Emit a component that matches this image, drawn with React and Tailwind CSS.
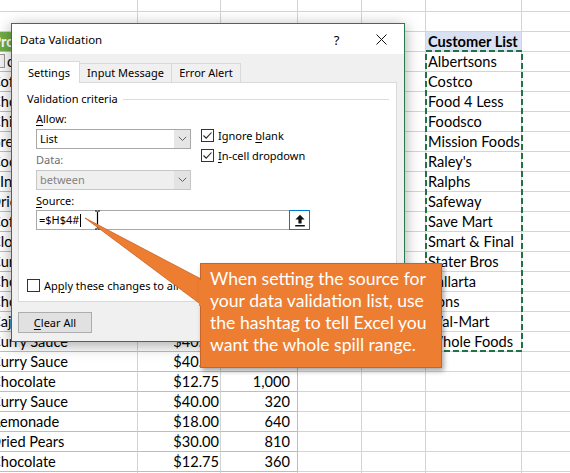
import React from "react";

const C = "ml-[-9px]";
const rows = [
  { k: "top", h: "h-[12px]" },
  { k: "r1" },
  { k: "hdr", a: "Product", o: "ml-[-8px]", b: "Price", c: "Qty", f: "Customer List" },
  { k: "filt", a: "c", b: "$18.00", c: "240", f: "Albertsons" },
  { a: "Coffee", o: C, b: "$46.00", c: "500", f: "Costco" },
  { a: "Chocolate", o: C, b: "$12.75", c: "180", f: "Food 4 Less" },
  { a: "Chips", o: C, b: "$1.80", c: "300", f: "Foodsco" },
  { a: "Green Tea", o: "ml-[-10px]", b: "$2.99", c: "720", f: "Mission Foods" },
  { a: "Cocoa", o: C, b: "$12.75", c: "120", f: "Raley's" },
  { a: "Indian Curry", o: "ml-[0px]", b: "$9.65", c: "250", f: "Ralphs" },
  { a: "Dried Apples", o: "ml-[-10px]", b: "$53.00", c: "40", f: "Safeway" },
  { a: "Coffee", o: C, b: "$46.00", c: "600", f: "Save Mart" },
  { a: "Cloves", o: C, b: "$9.65", c: "480", f: "Smart & Final" },
  { a: "Curry Sauce", o: C, b: "$40.00", c: "90", f: "Stater Bros" },
  { a: "Chocolate", o: C, b: "$12.75", c: "1,200", f: "Vallarta" },
  { a: "Chocolate", o: C, b: "$12.75", c: "860", f: "Vons" },
  { a: "Cajun Seasoning", o: C, b: "$22.00", c: "150", f: "Wal-Mart" },
  { a: "Curry Sauce", o: C, b: "$40.00", c: "320", f: "Whole Foods" },
  { a: "Curry Sauce", o: C, b: "$40.00", c: "640" },
  { a: "Chocolate", o: C, b: "$12.75", c: "1,000" },
  { a: "Curry Sauce", o: C, b: "$40.00", c: "320" },
  { a: "Lemonade", o: "ml-[-7px]", b: "$18.00", c: "640" },
  { a: "Dried Pears", o: "ml-[-10px]", b: "$30.00", c: "810" },
  { a: "Chocolate", o: C, b: "$12.75", c: "360" },
  { k: "bottom" },
];

function SheetRow({ r, i }) {
  const inTable = i >= 2 && i <= 23;
  const h = r.h || "h-[20px]";
  const bA = inTable ? "border-b-[#a9d08e]" : "border-b-[#d4d4d4]";
  const isHdr = r.k === "hdr";
  const fill = isHdr ? "bg-[#70ad47] text-white font-bold" : "text-black";
  return (
    <div className={`flex ${h} shrink-0`}>
      <div className={`w-[138px] shrink-0 border-b border-r border-r-[#d4d4d4] ${bA} ${fill} flex items-start overflow-hidden whitespace-nowrap`}>
        {r.k === "filt" ? (
          <>
            <span className="ml-[-1px] mt-[2px] w-[6px] h-[14px] border border-[#9a9a9a] bg-[#f4f4f4] shrink-0" />
            <span className="ml-[2px]">{r.a}</span>
          </>
        ) : (
          <span className={`${r.o || ""} shrink-0`}>{r.a}</span>
        )}
      </div>
      <div className={`w-[83px] shrink-0 border-b border-r border-r-[#d4d4d4] ${bA} ${fill} pr-[1px] flex justify-end items-start`}>
        <span>{r.b}</span>
      </div>
      <div className={`w-[77px] shrink-0 border-b border-r ${inTable ? "border-r-[#a9d08e]" : "border-r-[#d4d4d4]"} ${bA} ${fill} pr-[7px] flex justify-end items-start`}>
        <span>{r.c}</span>
      </div>
      <div className="w-[64px] shrink-0 border-b border-r border-[#d4d4d4]" />
      <div className="w-[64px] shrink-0 border-b border-r border-[#d4d4d4]" />
      <div className={`w-[96px] shrink-0 border-b border-r border-[#d4d4d4] pl-[2px] whitespace-nowrap overflow-hidden ${isHdr ? "bg-[#d9e1f2] font-bold" : ""}`}>
        {r.f}
      </div>
      <div className="w-[60px] shrink-0 border-b border-[#d4d4d4]" />
    </div>
  );
}

function Check({ checked }) {
  return (
    <span className="w-[13px] h-[13px] shrink-0 border border-[#333333] bg-white flex items-center justify-center">
      {checked && (
        <svg width="11" height="11" viewBox="0 0 11 11">
          <polyline points="1.5,5.5 4.2,8.2 9.5,2.5" fill="none" stroke="#222" strokeWidth="1.1" />
        </svg>
      )}
    </span>
  );
}

function Chevron() {
  return (
    <svg width="9" height="6" viewBox="0 0 9 6">
      <polyline points="0.8,0.8 4.5,4.5 8.2,0.8" fill="none" stroke="#606060" strokeWidth="1" />
    </svg>
  );
}

function Dialog() {
  return (
    <div className="absolute left-[11px] top-[23px] w-[394px] h-[319px] border border-[#2a7a4f] bg-[#f0f0f0] shadow-[0_3px_14px_rgba(0,0,0,0.35)] flex flex-col overflow-hidden text-[11px] leading-[16px] text-black font-['Noto_Sans',sans-serif]">
      {/* title bar */}
      <div className="h-[30px] shrink-0 bg-white flex items-center">
        <span className="pl-[8px] text-[11.5px] mt-[1px]">Data Validation</span>
        <span className="ml-auto w-[45px] flex justify-center text-[13px] mt-[1px]">?</span>
        <span className="w-[45px] flex justify-center items-center mt-[1px]">
          <svg width="11" height="11" viewBox="0 0 11 11">
            <path d="M0.5 0.5 L10.5 10.5 M10.5 0.5 L0.5 10.5" stroke="#111" strokeWidth="1" />
          </svg>
        </span>
      </div>
      {/* body */}
      <div className="pl-[6px] pt-[7px] flex flex-col">
        <div className="flex items-end h-[21px]">
          <div className="relative z-10 -mb-px h-[22px] w-[62px] bg-white border border-b-0 border-[#d9d9d9] flex items-center justify-center">
            Settings
          </div>
          <div className="h-[19px] w-[92px] border border-l-0 border-b-0 border-[#d9d9d9] flex items-center justify-center">
            Input Message
          </div>
          <div className="h-[19px] w-[69px] border border-l-0 border-b-0 border-[#d9d9d9] flex items-center justify-center">
            Error Alert
          </div>
        </div>
        <div className="w-[379px] h-[220px] bg-white border border-[#d9d9d9] pl-[8px] flex flex-col">
          <div className="mt-[8px] flex items-center">
            <span>Validation criteria</span>
            <span className="flex-1 h-px bg-[#dcdcdc] ml-[5px] mr-[7px]" />
          </div>
          <div className="pl-[9px] flex flex-col">
            <div className="mt-[4px]">
              <span className="underline underline-offset-2">A</span>llow:
            </div>
            <div className="mt-[2px] flex">
              <div className="w-[155px] flex flex-col">
                <div className="h-[20px] border border-[#a8a8a8] bg-white flex items-center">
                  <span className="flex-1 pl-[3px]">List</span>
                  <span className="w-[16px] h-full bg-[#e6e6e6] flex items-center justify-center">
                    <Chevron />
                  </span>
                </div>
                <div className="mt-[3px] text-[#6d6d6d]">Data:</div>
                <div className="mt-[2px] h-[20px] border border-[#c6c6c6] bg-[#efefef] flex items-center text-[#838383]">
                  <span className="flex-1 pl-[3px]">between</span>
                  <span className="w-[16px] h-full bg-[#e3e3e3] flex items-center justify-center">
                    <Chevron />
                  </span>
                </div>
              </div>
              <div className="ml-[10px] flex flex-col gap-[7px]">
                <div className="flex items-center gap-[4px] h-[13px]">
                  <Check checked />
                  <span>
                    Ignore <span className="underline underline-offset-2">b</span>lank
                  </span>
                </div>
                <div className="flex items-center gap-[4px] h-[13px]">
                  <Check checked />
                  <span>
                    <span className="underline underline-offset-2">I</span>n-cell dropdown
                  </span>
                </div>
              </div>
            </div>
            <div className="mt-[3px]">
              <span className="underline underline-offset-2">S</span>ource:
            </div>
            <div className="mt-[1px] w-[274px] h-[20px] border border-[#a8a8a8] bg-white flex items-center">
              <span className="pl-[2px] flex items-center">
                =$H$4#
                <span className="ml-[1px] w-px h-[13px] bg-black" />
              </span>
              <span className="ml-auto h-[20px] w-[21px] -mr-px border border-[#0078d7] bg-white flex items-center justify-center">
                <svg width="12" height="13" viewBox="0 0 12 13">
                  <path d="M6 0.8 L10.6 5.6 H7.6 V9.6 H4.4 V5.6 H1.4 Z" fill="#111" />
                  <rect x="1.2" y="11" width="9.6" height="1.5" fill="#111" />
                </svg>
              </span>
            </div>
          </div>
          <div className="mt-[49px] flex items-center gap-[4px] h-[13px] whitespace-nowrap">
            <Check />
            <span>
              Ap<span className="underline underline-offset-2">p</span>ly these changes to all other cells with the same settings
            </span>
          </div>
        </div>
        <div className="mt-[10px] w-[74px] h-[21px] border border-[#adadad] bg-[#e1e1e1] flex items-center justify-center">
          <span>
            <span className="underline underline-offset-2">C</span>lear All
          </span>
        </div>
      </div>
    </div>
  );
}

export default function App() {
  return (
    <div className="relative w-[570px] h-[473px] overflow-hidden bg-white font-['Lato',sans-serif] text-[14.6px] leading-[20px]">
      <div className="flex flex-col">
        {rows.map((r, i) => (
          <SheetRow key={i} r={r} i={i} />
        ))}
      </div>

      {/* copy marquee around the spill range */}
      <svg className="absolute left-[425px] top-[50px]" width="98" height="302" viewBox="0 0 98 302">
        <rect x="1" y="1" width="96" height="300" fill="none" stroke="#217346" strokeWidth="2" strokeDasharray="6 3" />
      </svg>

      <Dialog />

      {/* I-beam cursor */}
      <svg className="absolute left-[94px] top-[210px]" width="7" height="20" viewBox="0 0 7 20">
        <path d="M1 1 H3 M4 1 H6 M3.5 1.5 V18.5 M1 19 H3 M4 19 H6" stroke="#000" strokeWidth="1.2" fill="none" />
      </svg>

      {/* callout pointer */}
      <svg className="absolute left-0 top-0 pointer-events-none" width="570" height="473" viewBox="0 0 570 473">
        <polygon points="85,218 203,280 203,306" fill="#ed7d31" stroke="#c8642a" strokeWidth="0.8" />
      </svg>

      {/* callout box */}
      <div className="absolute left-[200px] top-[263px] w-[242px] h-[105px] bg-[#ed7d31] border border-[#c8642a] shadow-[2px_3px_5px_rgba(0,0,0,0.35)] pl-[9px] pt-[4px] text-white text-[17.6px] leading-[22px] whitespace-nowrap">
        <div>When setting the source for</div>
        <div>your data validation list, use</div>
        <div>the hashtag to tell Excel you</div>
        <div>want the whole spill range.</div>
      </div>
      <svg className="absolute left-[199px] top-[278px] pointer-events-none" width="6" height="30" viewBox="0 0 6 30">
        <rect x="0" y="2" width="6" height="26" fill="#ed7d31" />
      </svg>
    </div>
  );
}
